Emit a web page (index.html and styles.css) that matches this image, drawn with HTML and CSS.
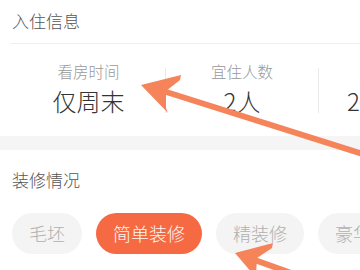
FILE: index.html
```html
<html>
<head>
    <meta name="viewport" content="width=device-width, initial-scale=1.0">
    <link rel="stylesheet" href="styles.css">
</head>
<body>
    <div class="section">
        <div class="title">入住信息</div>
    </div>
    <div class="stats">
        <div class="stat">
            <div class="label">看房时间</div>
            <div class="value">仅周末</div>
        </div>
        <div class="sep"></div>
        <div class="stat stat-mid">
            <div class="label">宜住人数</div>
            <div class="value">2人</div>
        </div>
        <div class="sep"></div>
        <div class="stat stat-last">
            <div class="label">入住时间</div>
            <div class="value">2个月内</div>
        </div>
    </div>
    <div class="band"></div>
    <div class="section2">
        <div class="title">装修情况</div>
        <div class="pills">
            <div class="pill">毛坯</div>
            <div class="pill active">简单装修</div>
            <div class="pill">精装修</div>
            <div class="pill">豪华装修</div>
        </div>
    </div>

    <svg class="arrows" width="360" height="270" viewBox="0 0 360 270">
        <line x1="160" y1="90" x2="372" y2="157" stroke="#f5845a" stroke-width="6" />
        <polygon points="141,85 181,75 180,80 166,91 166,108 168,113" fill="#f5845a" />
        <line x1="252" y1="259" x2="330" y2="287" stroke="#f5845a" stroke-width="6" />
        <polygon points="235,253 273,243 272,248 257,258 256,275 258,280" fill="#f5845a" />
    </svg>
</body>
</html>
```

FILE: styles.css
```css
* {
    margin: 0;
    padding: 0;
}

body {
    width: 360px;
    height: 270px;
    overflow: hidden;
    position: relative;
    background: white;
    font-family: "Noto Sans CJK SC", "Noto Sans", sans-serif;
    font-weight: 300;
}

.section {
    margin-left: 10px;
    border-bottom: 1px solid #efefef;
    height: 43px;
}

.title {
    font-size: 17px;
    line-height: 24px;
    color: #555;
    padding-top: 9px;
    padding-left: 2px;
}

.stats {
    display: flex;
    padding-left: 12px;
    height: 92px;
    white-space: nowrap;
}

.stat {
    width: 153px;
    flex-shrink: 0;
    text-align: center;
    padding-top: 17px;
}

.stat-mid {
    width: 152px;
}

.stat-last {
    width: 130px;
    text-align: left;
    padding-left: 28px;
}

.stat-last .label {
    visibility: hidden;
}

.label {
    font-size: 15.5px;
    line-height: 20px;
    color: #999;
}

.value {
    font-size: 24px;
    line-height: 30px;
    color: #333;
    margin-top: 5px;
}

.sep {
    width: 1px;
    height: 45px;
    margin-top: 24px;
    background: #e8e8e8;
    flex-shrink: 0;
}

.band {
    height: 14px;
    background: #f5f5f5;
}

.section2 .title {
    padding-top: 18px;
    padding-left: 12px;
}

.pills {
    display: flex;
    gap: 14px;
    margin-top: 21px;
    padding-left: 12px;
    white-space: nowrap;
}

.pill {
    flex-shrink: 0;
    height: 41px;
    line-height: 41px;
    padding: 0 17px;
    font-size: 18px;
    border-radius: 21px;
    background: #f4f4f4;
    color: #b0b0b0;
}

.pill.active {
    background: #f56a43;
    color: #fff8f2;
}

.arrows {
    position: absolute;
    left: 0;
    top: 0;
}
```
